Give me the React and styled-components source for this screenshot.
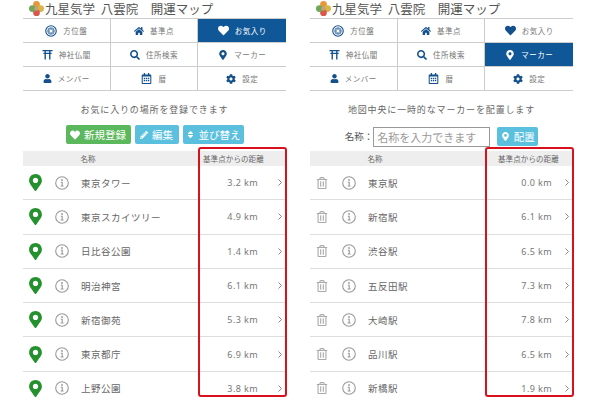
import React from "react";
import styled, { createGlobalStyle } from "styled-components";
import {
  FaHeart,
  FaHome,
  FaSearch,
  FaMapMarkerAlt,
  FaUser,
  FaRegCalendarAlt,
  FaCog,
  FaPencilAlt,
  FaSort,
  FaRegTrashAlt,
} from "react-icons/fa";

const GlobalStyle = createGlobalStyle`
  html, body {
    margin: 0;
    background: #fff;
    font-family: "Noto Sans CJK JP", "Noto Sans", sans-serif;
  }
  * { box-sizing: border-box; }
`;

const Page = styled.div`
  width: 600px;
  height: 400px;
  overflow: hidden;
  display: flex;
  gap: 24px;
  padding-left: 23px;
`;

const Panel = styled.div`
  position: relative;
  width: 263px;
  flex: none;
`;

const Title = styled.div`
  height: 18px;
  display: flex;
  align-items: center;
  padding-left: 6px;
  gap: 1px;
  font-size: 12.5px;
  color: #555;
  white-space: pre;
  line-height: 15px;
  padding-bottom: 2px;
`;

const TitleText = styled.span`
  word-spacing: 3px;
`;

const Nav = styled.div`
  display: grid;
  grid-template-columns: repeat(3, 1fr);
  grid-auto-rows: 24px;
  border-top: 1px solid #ccc;
`;

const NavCell = styled.div`
  display: flex;
  align-items: center;
  justify-content: center;
  gap: 6px;
  font-size: 7.5px;
  letter-spacing: 0.5px;
  border-bottom: 1px solid #ccc;
  border-right: ${(p) => (p.$last ? "none" : "1px solid #ccc")};
  background: ${(p) => (p.$active ? "#0f5796" : "#fff")};
  color: ${(p) => (p.$active ? "#fff" : "#777")};
  svg {
    color: ${(p) => (p.$active ? "#fff" : "#13508c")};
    flex: none;
  }
`;

const Message = styled.div`
  height: 34px;
  padding-top: 11px;
  line-height: 16px;
  text-align: center;
  font-size: 9px;
  letter-spacing: 0.85px;
  color: #666;
`;

const Controls = styled.div`
  height: 26px;
  display: flex;
  justify-content: center;
  align-items: flex-start;
  gap: 4px;
  padding-top: ${(p) => p.$top || 0}px;
`;

const Button = styled.div`
  height: 19px;
  display: flex;
  align-items: center;
  justify-content: center;
  gap: 4px;
  width: ${(p) => p.$w}px;
  margin-left: ${(p) => p.$ml || 0}px;
  border-radius: 2px;
  background: ${(p) => (p.$green ? "#5cb85c" : "#5bc0de")};
  color: #fff;
  font-size: 10.5px;
  white-space: nowrap;
`;

const NameLabel = styled.span`
  font-size: 9.5px;
  color: #555;
  line-height: 19px;
  margin-right: -4px;
`;

const NameInput = styled.div`
  width: 117px;
  height: 20px;
  border: 1px solid #999;
  padding-left: 3px;
  font-size: 11px;
  line-height: 18px;
  color: #999;
  white-space: nowrap;
`;

const ListHead = styled.div`
  height: 15px;
  display: flex;
  align-items: center;
  background: #eee;
  font-size: 7.5px;
  color: #666;
`;

const HeadName = styled.span`
  width: 175px;
  text-align: center;
  padding-right: 45px;
`;

const HeadDist = styled.span`
  padding-left: ${(p) => p.$pad}px;
  letter-spacing: 0.1px;
  white-space: nowrap;
`;

const Row = styled.div`
  height: 34.3px;
  display: flex;
  align-items: center;
  padding-left: 6px;
  border-bottom: 1px solid #ddd;
  color: #666;
`;

const Slot = styled.div`
  width: 26px;
  flex: none;
  display: flex;
  align-items: center;
`;

const Pin = styled(FaMapMarkerAlt)`
  margin-left: -2px;
  color: #24912e;
`;

const PlaceName = styled.div`
  flex: 1;
  font-size: 9.5px;
  letter-spacing: 0.5px;
  white-space: nowrap;
`;

const Distance = styled.div`
  font-family: "Noto Sans", sans-serif;
  font-size: 9px;
  letter-spacing: 0.4px;
  color: #777;
  white-space: nowrap;
`;

const Chevron = styled.svg`
  width: 4px;
  height: 7px;
  flex: none;
  margin-left: ${(p) => p.$gap}px;
  margin-right: 4px;
`;

const Highlight = styled.div`
  position: absolute;
  left: 175px;
  top: 147px;
  width: 89px;
  height: 250px;
  border: 2px solid #d9111d;
  border-radius: 3px;
  pointer-events: none;
`;

const Logo = () => (
  <svg width="15" height="15" viewBox="0 0 20 20" style={{ flex: "none" }}>
    <circle cx="10" cy="4.5" r="4.5" fill="#e8963a" />
    <circle cx="15.5" cy="10" r="4.5" fill="#d9b54a" />
    <circle cx="10" cy="15.5" r="4.5" fill="#d8574a" />
    <circle cx="4.5" cy="10" r="4.5" fill="#6fa85a" />
    <circle cx="10" cy="10" r="3" fill="#c9a070" />
  </svg>
);

const Compass = () => (
  <svg width="12" height="12" viewBox="0 0 24 24" fill="none" stroke="currentColor">
    <circle cx="12" cy="12" r="10.5" strokeWidth="2.2" />
    <circle cx="12" cy="12" r="6.5" strokeWidth="1.6" />
    <path d="M12 7l5 5-5 5-5-5z" strokeWidth="1.8" />
  </svg>
);

const Torii = () => (
  <svg width="11" height="11" viewBox="0 0 24 24" fill="none" stroke="currentColor" strokeWidth="3">
    <path d="M1 3.5h22M3 9.5h18M7 3.5V23M17 3.5V23" />
  </svg>
);

const InfoIcon = () => (
  <svg width="14" height="14" viewBox="0 0 14 14" fill="none" stroke="#999">
    <circle cx="7" cy="7" r="6.3" strokeWidth="1.1" />
    <path d="M5.8 6.2H7.2V10M5.6 10H8.6" strokeWidth="1.1" />
    <circle cx="7" cy="4" r="0.9" fill="#999" stroke="none" />
  </svg>
);

const navItems = [
  { label: "方位盤", icon: <Compass /> },
  { label: "基準点", icon: <FaHome size={10} /> },
  { label: "お気入り", icon: <FaHeart size={11} /> },
  { label: "神社仏閣", icon: <Torii /> },
  { label: "住所検索", icon: <FaSearch size={10} /> },
  { label: "マーカー", icon: <FaMapMarkerAlt size={10} /> },
  { label: "メンバー", icon: <FaUser size={9} /> },
  { label: "暦", icon: <FaRegCalendarAlt size={11} /> },
  { label: "設定", icon: <FaCog size={10} /> },
];

const favourites = [
  ["東京タワー", "3.2 km"],
  ["東京スカイツリー", "4.9 km"],
  ["日比谷公園", "1.4 km"],
  ["明治神宮", "6.1 km"],
  ["新宿御苑", "5.3 km"],
  ["東京都庁", "6.9 km"],
  ["上野公園", "3.8 km"],
];

const markers = [
  ["東京駅", "0.0 km"],
  ["新宿駅", "6.1 km"],
  ["渋谷駅", "6.5 km"],
  ["五反田駅", "7.3 km"],
  ["大崎駅", "7.8 km"],
  ["品川駅", "6.5 km"],
  ["新橋駅", "1.9 km"],
];

const NavGrid = ({ active }) => (
  <Nav>
    {navItems.map((item, i) => (
      <NavCell key={item.label} $active={item.label === active} $last={i % 3 === 2}>
        {item.icon}
        {item.label}
      </NavCell>
    ))}
  </Nav>
);

const List = ({ items, lead, gap }) =>
  items.map(([name, dist]) => (
    <Row key={name}>
      <Slot>{lead}</Slot>
      <Slot>
        <InfoIcon />
      </Slot>
      <PlaceName>{name}</PlaceName>
      <Distance>{dist}</Distance>
      <Chevron $gap={gap} viewBox="0 0 4 7" fill="none" stroke="#888">
        <path d="M0.5 0.5L3.5 3.5L0.5 6.5" />
      </Chevron>
    </Row>
  ));

const App = () => {
  return (
    <>
      <GlobalStyle />
      <Page>
        <Panel>
          <Title>
            <Logo />
            <TitleText>九星気学 八雲院　開運マップ</TitleText>
          </Title>
          <NavGrid active="お気入り" />
          <Message>お気に入りの場所を登録できます</Message>
          <Controls>
            <Button $green $w={65}>
              <FaHeart size={10} />
              新規登録
            </Button>
            <Button $w={44}>
              <FaPencilAlt size={8} />
              編集
            </Button>
            <Button $w={61}>
              <FaSort size={9} />
              並び替え
            </Button>
          </Controls>
          <ListHead>
            <HeadName>名称</HeadName>
            <HeadDist $pad={5}>基準点からの距離</HeadDist>
          </ListHead>
          <List items={favourites} gap={20} lead={<Pin size={17} />} />
          <Highlight />
        </Panel>
        <Panel>
          <Title>
            <Logo />
            <TitleText>九星気学 八雲院　開運マップ</TitleText>
          </Title>
          <NavGrid active="マーカー" />
          <Message>地図中央に一時的なマーカーを配置します</Message>
          <Controls $top={2}>
            <NameLabel>名称：</NameLabel>
            <NameInput>名称を入力できます</NameInput>
            <Button $w={41} $ml={3}>
              <FaMapMarkerAlt size={9} />
              配置
            </Button>
          </Controls>
          <ListHead>
            <HeadName>名称</HeadName>
            <HeadDist $pad={13}>基準点からの距離</HeadDist>
          </ListHead>
          <List items={markers} gap={13} lead={<FaRegTrashAlt size={12} color="#aaa" />} />
          <Highlight />
        </Panel>
      </Page>
    </>
  );
};

export default App;
